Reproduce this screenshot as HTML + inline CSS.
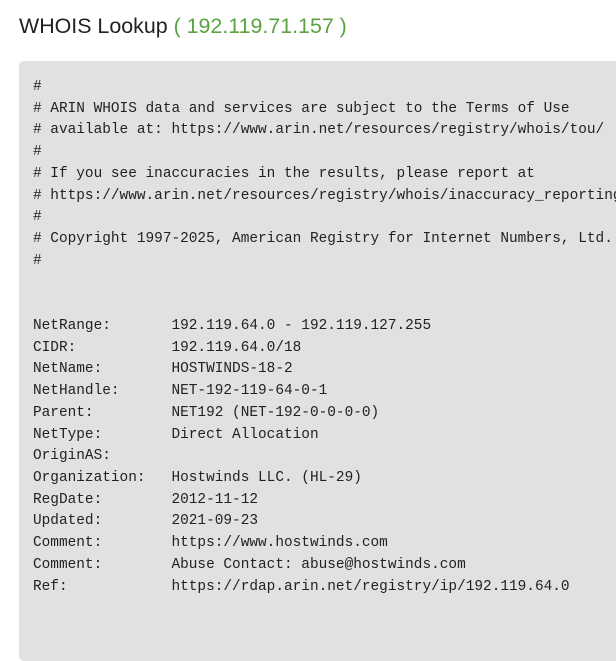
<!DOCTYPE html>
<html><head><style>
body{margin:0;background:#fff;width:616px;height:635px;overflow:hidden;font-family:"Liberation Sans",sans-serif}
h1{position:absolute;left:19px;top:14px;margin:0;font-weight:normal;font-size:21.4px;color:#222;white-space:nowrap}
h1 span{color:#5aa340}
pre{position:absolute;left:19px;top:61px;width:640px;height:600px;margin:0;background:#e1e1e1;border-radius:5px;padding:16px 0 0 14px;box-sizing:border-box;font-family:"Liberation Mono",monospace;font-size:14.43px;line-height:21.72px;color:#222}
</style></head><body>
<h1>WHOIS Lookup <span>( 192.119.71.157 )</span></h1>
<pre>#
# ARIN WHOIS data and services are subject to the Terms of Use
# available at: https://www.arin.net/resources/registry/whois/tou/
#
# If you see inaccuracies in the results, please report at
# https://www.arin.net/resources/registry/whois/inaccuracy_reporting/
#
# Copyright 1997-2025, American Registry for Internet Numbers, Ltd.
#


NetRange:       192.119.64.0 - 192.119.127.255
CIDR:           192.119.64.0/18
NetName:        HOSTWINDS-18-2
NetHandle:      NET-192-119-64-0-1
Parent:         NET192 (NET-192-0-0-0-0)
NetType:        Direct Allocation
OriginAS:
Organization:   Hostwinds LLC. (HL-29)
RegDate:        2012-11-12
Updated:        2021-09-23
Comment:        https://www.hostwinds.com
Comment:        Abuse Contact: abuse@hostwinds.com
Ref:            https://rdap.arin.net/registry/ip/192.119.64.0
</pre>
</body></html>
